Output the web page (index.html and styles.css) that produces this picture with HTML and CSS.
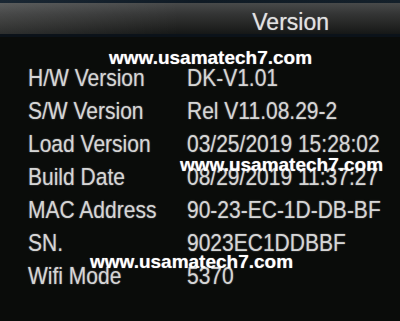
FILE: index.html
```html
<!DOCTYPE html>
<html>
<head>
<meta charset="utf-8">
<link rel="stylesheet" href="styles.css">
</head>
<body>
<div class="screen">
  <div class="topline"></div>
  <header class="header">
    <span class="title">Version</span>
  </header>
  <div class="rows">
    <div class="row"><span class="label">H/W Version</span><span class="value">DK-V1.01</span></div>
    <div class="row"><span class="label">S/W Version</span><span class="value">Rel V11.08.29-2</span></div>
    <div class="row"><span class="label">Load Version</span><span class="value">03/25/2019 15:28:02</span></div>
    <div class="row"><span class="label">Build Date</span><span class="value">08/29/2019 11:37:27</span></div>
    <div class="row"><span class="label">MAC Address</span><span class="value">90-23-EC-1D-DB-BF</span></div>
    <div class="row"><span class="label">SN.</span><span class="value">9023EC1DDBBF</span></div>
    <div class="row"><span class="label">Wifi Mode</span><span class="value">5370</span></div>
  </div>
  <div class="mark mark-1">www.usamatech7.com</div>
  <div class="mark mark-2">www.usamatech7.com</div>
  <div class="mark mark-3">www.usamatech7.com</div>
</div>
</body>
</html>
```
FILE: styles.css
```css
html, body {
  margin: 0;
  padding: 0;
  background: #0a0c0a;
}
.screen {
  position: relative;
  width: 400px;
  height: 321px;
  overflow: hidden;
  background: #0a0c0a;
  font-family: "Liberation Sans", Arial, sans-serif;
}
.topline {
  height: 3px;
  background: linear-gradient(to right, #1a2733, #0f1a24 50%, #14202a);
}
.header {
  height: 31px;
  display: flex;
  justify-content: flex-end;
  align-items: flex-start;
  padding-right: 71px;
  background:
    linear-gradient(to right, rgba(255,255,255,0.10), rgba(255,255,255,0) 45%),
    linear-gradient(to bottom, #484a4a 0%, #343535 35%, #222322 75%, #151716 100%);
  border-bottom: 3px solid #0b1219;
}
.title {
  display: inline-block;
  margin-top: 3px;
  font-size: 23px;
  line-height: 31px;
  color: #e2e2e2;
  transform: scaleY(1.08);
  text-shadow: 0 0 1px rgba(255,255,255,0.5);
}
.rows {
  padding-top: 24px;
  padding-left: 28px;
  display: flex;
  flex-direction: column;
}
.row {
  display: flex;
  height: 33px;
  line-height: 33px;
  font-size: 21px;
  color: #d6d6d6;
  text-shadow: 0 0 1.5px rgba(220,220,220,0.55);
}
.label,
.value {
  display: inline-block;
  transform: scaleY(1.1);
  white-space: nowrap;
}
.label {
  width: 159px;
  flex: none;
}
.mark {
  position: absolute;
  font-size: 19px;
  line-height: 19px;
  font-weight: bold;
  color: #ffffff;
  white-space: nowrap;
  text-shadow: 0 0 1px rgba(255,255,255,0.6);
}
.mark-1 { left: 109px; top: 48px; }
.mark-2 { left: 180px; top: 155px; }
.mark-3 { left: 90px; top: 252px; }
```
